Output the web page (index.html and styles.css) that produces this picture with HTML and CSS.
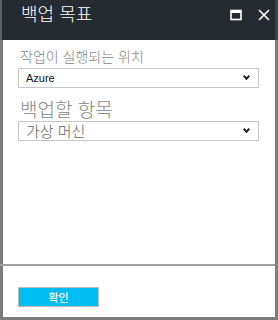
FILE: index.html
```html
<!DOCTYPE html>
<html lang="ko">
<head>
  <meta charset="UTF-8" />
  <meta name="viewport" content="width=device-width, initial-scale=1.0">
  <title>백업 목표</title>
  <link rel="stylesheet" href="styles.css">
</head>
<body>
  <div class="blade">
    <div class="blade-header">
      <div class="blade-title">백업 목표</div>
      <div class="blade-actions">
        <!-- maximize -->
        <svg class="icon" width="12" height="12" viewBox="0 0 12 12">
          <rect x="1" y="1.5" width="10" height="9" fill="none" stroke="#fff" stroke-width="1.6"/>
          <rect x="1" y="1" width="10" height="3" fill="#fff"/>
        </svg>
        <!-- close -->
        <svg class="icon" width="12" height="12" viewBox="0 0 12 12">
          <path d="M1 1 L11 11 M11 1 L1 11" stroke="#fff" stroke-width="1.6" fill="none"/>
        </svg>
      </div>
    </div>
    <div class="blade-content">
      <div class="field">
        <label class="field-label small">작업이 실행되는 위치</label>
        <div class="select">
          <span class="select-value small">Azure</span>
          <span class="chevron"></span>
        </div>
      </div>
      <div class="field">
        <label class="field-label large">백업할 항목</label>
        <div class="select">
          <span class="select-value large">가상 머신</span>
          <span class="chevron"></span>
        </div>
      </div>
    </div>
    <div class="blade-footer">
      <button class="ok-btn">확인</button>
    </div>
  </div>
</body>
</html>
```

FILE: styles.css
```css
/* Reset */
* { margin: 0; padding: 0; box-sizing: border-box; }
body {
  font-family: "Noto Sans CJK KR", "Noto Sans", sans-serif;
  background: #fff;
}
/* Blade frame */
.blade {
  width: 278px;
  height: 320px;
  display: flex;
  flex-direction: column;
  border-left: 3px solid #7d7d7d;
  border-right: 3px solid #7d7d7d;
  border-bottom: 3px solid #7d7d7d;
  background: #fff;
}
.blade-header {
  height: 40px;
  background: #262b31;
  display: flex;
  justify-content: space-between;
  align-items: flex-start;
  padding: 0 5px 0 19px;
  margin: 0 -3px 0 -3px;
  border-left: 2px solid #5c6066;
  border-right: 3px solid #3e4248;
}
.blade-title {
  color: #fff;
  font-size: 18px;
  font-weight: 300;
  line-height: 26px;
}
.blade-actions {
  display: flex;
  gap: 16px;
  padding-top: 9px;
}
.icon { display: block; }
/* Content */
.blade-content {
  flex: 1;
  padding: 5px 16px 0 15px;
}
.field-label {
  display: block;
  color: #858585;
  font-weight: 300;
  padding-left: 2px;
}
.field-label.small {
  font-size: 14px;
  line-height: 23px;
}
.field-label.large {
  font-size: 19px;
  line-height: 24px;
  margin-top: 9px;
}
.select {
  height: 20px;
  border: 1px solid #c8c8c8;
  display: flex;
  align-items: center;
  justify-content: space-between;
  padding: 0 9px 0 7px;
}
.select-value.small {
  font-family: "Liberation Sans", Arial, sans-serif;
  font-size: 11px;
  color: #111;
}
.select-value.large {
  font-size: 15px;
  font-weight: 300;
  color: #666;
  line-height: 18px;
}
.chevron {
  width: 5px;
  height: 5px;
  border-right: 2px solid #222;
  border-bottom: 2px solid #222;
  transform: rotate(45deg);
  margin-top: -3px;
}
/* Footer */
.blade-footer {
  height: 53px;
  border-top: 2px solid #a0a0a0;
  margin-left: -3px;
  padding: 17px 0 0 18px;
}
.ok-btn {
  width: 81px;
  height: 20px;
  background: #00bdf2;
  border: 1px solid #c2b8b8;
  color: #fff;
  font-family: "Noto Sans CJK KR", sans-serif;
  font-size: 11px;
  font-weight: 500;
  cursor: pointer;
}
```
